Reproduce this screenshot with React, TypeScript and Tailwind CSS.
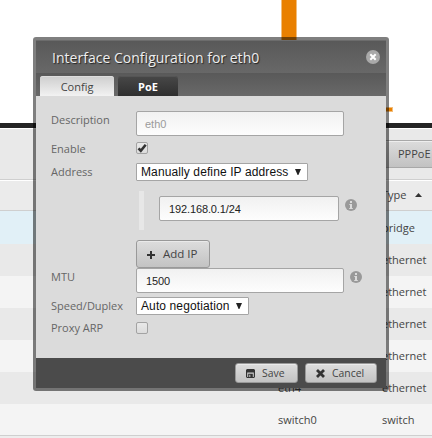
import React from 'react';

const rows = [
  { name: '', type: 'bridge', tone: 'h-[33px] bg-[#e1f0f7] pt-0.5' },
  { name: 'eth0', type: 'ethernet', tone: 'h-8 bg-[#e9e9e9]' },
  { name: 'eth1', type: 'ethernet', tone: 'h-8 bg-[#f4f4f4]' },
  { name: 'eth2', type: 'ethernet', tone: 'h-8 bg-[#e9e9e9]' },
  { name: 'eth3', type: 'ethernet', tone: 'h-8 bg-[#f4f4f4]' },
  { name: 'eth4', type: 'ethernet', tone: 'h-8 bg-[#e9e9e9]' },
  { name: 'switch0', type: 'switch', tone: 'h-[31px] bg-[#f4f4f4] pt-0.5' },
];

function InfoIcon() {
  return (
    <svg className="block size-3 shrink-0" viewBox="0 0 12 12">
      <circle cx="6" cy="6" r="6" fill="#999" />
      <path d="M5 2h2v2H5zM4.3 5H7v4h.8v1H4.2V9H5V6h-.7z" fill="#dbdbdb" />
    </svg>
  );
}

function TextInput({ value, className, muted }: { value: string; className: string; muted?: boolean }) {
  return (
    <div
      className={`flex h-[25px] shrink-0 items-center rounded-[2px] border border-[#a5a5a5] bg-linear-to-b from-[#f1f1f1] to-[#fdfdfd] pt-0.5 font-['Liberation_Sans',Arial,sans-serif] text-[11px] ${muted ? 'pl-2 text-[#9b9b9b]' : 'pl-[9px] tracking-[-0.12px] text-[#222]'} ${className}`}
    >
      {value}
    </div>
  );
}

function Select({ value, className }: { value: string; className: string }) {
  return (
    <div
      className={`flex h-[18px] items-center justify-between rounded-[1px] border border-[#a5a5a5] bg-white pr-1.5 pl-1 font-['Liberation_Sans',Arial,sans-serif] text-[12px] tracking-[0.11px] text-[#111] ${className}`}
    >
      <span className="whitespace-nowrap">{value}</span>
      <svg className="h-1.5 w-1.5" viewBox="0 0 6 6">
        <path d="M0 0h6L3.4 6h-.8z" fill="#222" />
      </svg>
    </div>
  );
}

function Checkbox({ checked }: { checked?: boolean }) {
  return (
    <div className="relative mt-[3px] size-3 rounded-[2px] border border-[#a3a3a3] bg-linear-to-b from-[#e9e9e9] to-[#dcdcdc]">
      {checked && (
        <svg className="absolute top-0 left-0 size-[10px]" viewBox="0 0 10 10">
          <path d="M1.5 5.3l2.3 2.4L8.7 1.7" fill="none" stroke="#333" strokeWidth="2.6" />
        </svg>
      )}
    </div>
  );
}

function Field({ label, className, pad = '', children }: { label: string; className: string; pad?: string; children: React.ReactNode }) {
  return (
    <div className={`flex ${className}`}>
      <div className={`w-[85px] shrink-0 leading-[18px] text-[#666] ${pad}`}>{label}</div>
      {children}
    </div>
  );
}

function Backdrop() {
  return (
    <div className="flex h-full flex-col">
      <div className="relative h-[123px] shrink-0 bg-white">
        <div className="absolute top-0 left-[281px] h-[109px] w-4 border-x border-[#f2bd7b] bg-[#e98000]" />
        <div className="absolute top-[107px] left-[281px] h-[5px] w-[112px] border border-[#f2bd7b] bg-[#e98000]" />
      </div>
      <div className="h-[5px] shrink-0 bg-[#242424]" />
      <div className="flex h-[51px] shrink-0 justify-end border-t border-white bg-[#e9e9e9] pt-[11px]">
        <div className="h-7 w-[62px] border-y border-[#a8a8a8] bg-linear-to-b from-[#dcdcdc] to-[#c2c2c2] pl-7 leading-[26px] whitespace-nowrap text-[#444] shadow-[inset_0_1px_#eee]">
          PPPoE
        </div>
      </div>
      <div className="flex h-8 shrink-0 items-center border-y border-[#cfcfcf] bg-[#ebebeb] pl-[382px] shadow-[inset_0_1px_#fff]">
        <span>Type</span>
        <svg className="ml-[9px] h-1 w-[7px]" viewBox="0 0 7 4">
          <path d="M0 4h7L3.5 0z" fill="#333" />
        </svg>
      </div>
      {rows.map((row, i) => (
        <div key={i} className={`flex shrink-0 items-center pl-[278px] ${row.tone}`}>
          <span className="w-[104px]">{row.name}</span>
          <span>{row.type}</span>
        </div>
      ))}
      <div className="h-[3px] shrink-0 border-t border-[#cfcfcf] bg-[#ededed]" />
    </div>
  );
}

const button = 'flex items-center rounded-[3px] border border-[#999] bg-linear-to-b from-[#dddddd] to-[#c3c3c3] text-[#444] shadow-[inset_0_1px_#eaeaea]';

export default function App() {
  return (
    <div className="relative h-[438px] w-[432px] overflow-hidden bg-white font-['Open_Sans',sans-serif] text-[11px] text-[#444]">
      <Backdrop />
      <div className="absolute top-[37px] left-[33px] flex h-[354px] w-[356px] flex-col rounded-[3px] border-3 border-black/50 bg-[#dbdbdb] bg-clip-padding">
        <header className="flex h-[33px] shrink-0 items-center justify-between border-t border-[#6c6c6c] bg-linear-to-b from-[#595959] to-[#686868] pr-1.5 pl-4">
          <h1 className="text-[14px] tracking-[0.02px] text-[#eee] [text-shadow:1px_1px_1px_#222]">Interface Configuration for eth0</h1>
          <svg className="mb-px size-[14px]" viewBox="0 0 14 14">
            <circle cx="7" cy="7" r="7" fill="#a9a9a9" />
            <path d="M4.3 4.3l5.4 5.4M9.7 4.3L4.3 9.7" stroke="#fff" strokeWidth="2" />
          </svg>
        </header>
        <nav className="flex h-[23px] shrink-0 items-end gap-1 bg-linear-to-b from-[#595959] to-[#696969] pl-1">
          <div className="h-5 w-[74px] rounded-t-[3px] bg-linear-to-b from-[#cecece] to-[#f2f2f2] text-center leading-[21px] text-[#444] shadow-[inset_0_1px_#ddd]">Config</div>
          <div className="h-5 w-[60px] rounded-t-[3px] bg-linear-to-b from-[#484848] to-[#2f2f2f] text-center leading-[21px] font-bold text-white shadow-[inset_0_1px_#555]">PoE</div>
        </nav>
        <main className="flex-1 pt-[15px] pl-[15px]">
          <Field label="Description" className="h-7">
            <TextInput value="eth0" className="w-[208px]" muted />
          </Field>
          <Field label="Enable" className="h-6" pad="pt-px">
            <Checkbox checked />
          </Field>
          <Field label="Address" className="h-[105px]">
            <div>
              <Select value="Manually define IP address" className="w-[172px]" />
              <div className="mt-[10px] ml-[3px] flex h-[39px] items-start border-l-5 border-[#e7e7e7] pt-[5px] pl-[15px]">
                <TextInput value="192.168.0.1/24" className="w-[180px]" />
                <div className="mt-[3px] ml-1.5"><InfoIcon /></div>
              </div>
              <div className={`mt-[10px] h-7 w-[74px] pl-[10px] text-[11.5px] ${button}`}>
                <svg className="mt-px mr-2 size-2" viewBox="0 0 8 8">
                  <path d="M4 0v8M0 4h8" stroke="#333" strokeWidth="2" />
                </svg>
                Add IP
              </div>
            </div>
          </Field>
          <Field label="MTU" className="h-[29px]">
            <TextInput value="1500" className="w-[208px]" />
            <div className="mt-[3px] ml-1.5"><InfoIcon /></div>
          </Field>
          <Field label="Speed/Duplex" className="h-[22px]">
            <Select value="Auto negotiation" className="w-[113px]" />
          </Field>
          <Field label="Proxy ARP" className="h-6">
            <Checkbox />
          </Field>
        </main>
        <footer className="flex h-[30px] shrink-0 items-center justify-end gap-[7px] bg-[#4b4b4b] pr-[9px]">
          <div className={`h-5 w-[63px] pl-[10px] text-[10.4px] ${button}`}>
            <svg className="mr-[7px] size-[9px]" viewBox="0 0 9 9">
              <path fillRule="evenodd" d="M1 0h7l1 1v7L8 9H1L0 8V1zM1.2 3.5V8h1V4.8h4.6V8h1V3.5zM3.3 5.8h1v2.1h-1z" fill="#333" />
            </svg>
            <span className="pt-px">Save</span>
          </div>
          <div className={`h-5 w-[72px] pl-[10px] text-[10.4px] ${button}`}>
            <svg className="mr-[7px] size-[9px]" viewBox="0 0 9 9">
              <path d="M1 1l7 7M8 1L1 8" stroke="#333" strokeWidth="2.8" />
            </svg>
            <span className="pt-px">Cancel</span>
          </div>
        </footer>
      </div>
    </div>
  );
}
